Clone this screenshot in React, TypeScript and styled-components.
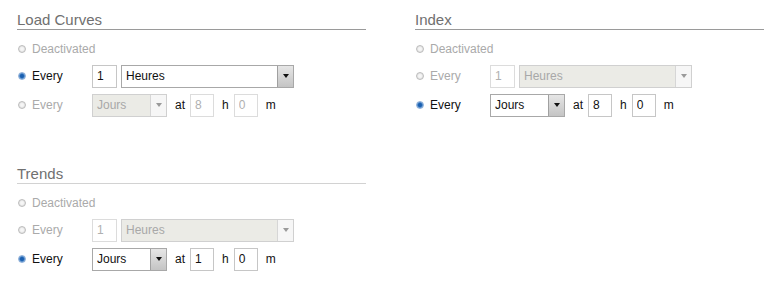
import styled, {createGlobalStyle} from "styled-components";

const GlobalStyle = createGlobalStyle`
    html, body {
        margin: 0;
        padding: 0;
        background: #fff;
    }

    body {
        font-family: "Liberation Sans", Arial, sans-serif;
        font-size: 12px;
        color: #111;
    }
`

type Schedule = {
    title: string;
    lineColor: string;
    mode: "hours" | "days";
    every: string;
    period: string;
    day: string;
    hour: string;
    minute: string;
}

const schedules: Schedule[] = [
    {title: "Load Curves", lineColor: "#9a9a9a", mode: "hours", every: "1", period: "Heures", day: "Jours", hour: "8", minute: "0"},
    {title: "Index", lineColor: "#9a9a9a", mode: "days", every: "1", period: "Heures", day: "Jours", hour: "8", minute: "0"},
    {title: "Trends", lineColor: "#d2d2d2", mode: "days", every: "1", period: "Heures", day: "Jours", hour: "1", minute: "0"},
]

const Select = ({value, width, disabled}: { value: string; width: number; disabled?: boolean }) => (
    <StyledSelect $width={width} $disabled={disabled}>
        <SelectValue>{value}</SelectValue>
        <SelectArrow $disabled={disabled}/>
    </StyledSelect>
)

const Section = ({s}: { s: Schedule }) => {
    const hours = s.mode === "hours";
    return (
        <StyledSection>
            <Title $line={s.lineColor}>{s.title}</Title>
            <Rows>
                <Row $height={20}>
                    <Radio/>
                    <Label $disabled>Deactivated</Label>
                </Row>
                <Row>
                    <Radio $checked={hours}/>
                    <Label $disabled={!hours}>Every</Label>
                    <Field defaultValue={s.every} disabled={!hours} $width={25}/>
                    <Select value={s.period} width={173} disabled={!hours}/>
                </Row>
                <Row>
                    <Radio $checked={!hours}/>
                    <Label $disabled={hours}>Every</Label>
                    <Select value={s.day} width={75} disabled={hours}/>
                    <Unit>at</Unit>
                    <Field defaultValue={s.hour} disabled={hours} $width={24}/>
                    <Unit>h</Unit>
                    <Field defaultValue={s.minute} disabled={hours} $width={24}/>
                    <Unit>m</Unit>
                </Row>
            </Rows>
        </StyledSection>
    )
}

export default function App() {
    return (
        <>
            <GlobalStyle/>
            <Page>
                {schedules.map(s => <Section key={s.title} s={s}/>)}
            </Page>
        </>
    )
}

const Page = styled.div`
    display: grid;
    grid-template-columns: 349px 349px;
    column-gap: 49px;
    row-gap: 48px;
    padding: 11px 0 0 17px;
`

const StyledSection = styled.section`
    display: flex;
    flex-direction: column;
`

const Title = styled.h2<{ $line: string }>`
    margin: 0;
    font-size: 15px;
    line-height: 18px;
    font-weight: normal;
    color: #707070;
    border-bottom: 1px solid ${p => p.$line};
`

const Rows = styled.div`
    display: flex;
    flex-direction: column;
    gap: 5px;
    margin-top: 9px;
`

const Row = styled.div<{ $height?: number }>`
    display: flex;
    align-items: center;
    height: ${p => p.$height ?? 24}px;
`

const Radio = styled.span<{ $checked?: boolean }>`
    box-sizing: border-box;
    width: 8px;
    height: 8px;
    margin: 0 6px 0 1px;
    border-radius: 50%;
    border: 1px solid ${p => p.$checked ? "#8fb0d8" : "#bdbdbd"};
    background: ${p => p.$checked
            ? "radial-gradient(circle, #1a5fb0 0 35%, #5f95d0 65%, #d4e2f0 100%)"
            : "radial-gradient(circle, #f6f6f6 0 30%, #d2d2d2 100%)"};
`

const Label = styled.span<{ $disabled?: boolean }>`
    width: 60px;
    color: ${p => p.$disabled ? "#aaa" : "#111"};
    white-space: nowrap;
`

const Field = styled.input<{ $width: number }>`
    box-sizing: border-box;
    width: ${p => p.$width}px;
    height: 23px;
    margin: 0 4px 0 0;
    padding: 0 0 0 4px;
    border: 1px solid ${p => p.disabled ? "#dcdcdc" : "#c6c6c6"};
    background: #fff;
    font: 12px "Liberation Sans", Arial, sans-serif;
    color: #111;
    outline: none;

    &:disabled {
        color: #b0b0b0;
    }
`

const StyledSelect = styled.div<{ $width: number; $disabled?: boolean }>`
    box-sizing: border-box;
    display: flex;
    align-items: stretch;
    width: ${p => p.$width}px;
    height: 23px;
    margin-right: 4px;
    border: 1px solid ${p => p.$disabled ? "#d0d0d0" : "#a8a8a8"};
    background: ${p => p.$disabled ? "#ebebe6" : "#fff"};
    color: ${p => p.$disabled ? "#a8a8a8" : "#111"};
`

const SelectValue = styled.span`
    flex: 1;
    display: flex;
    align-items: center;
    padding-left: 4px;
`

const SelectArrow = styled.span<{ $disabled?: boolean }>`
    box-sizing: border-box;
    width: 16px;
    display: flex;
    align-items: center;
    justify-content: center;
    border-left: 1px solid ${p => p.$disabled ? "#d6d6d6" : "#a0a0a0"};
    background: ${p => p.$disabled
            ? "#f6f6f6"
            : "linear-gradient(#e6e6e6, #c4c4c4)"};

    &::after {
        content: "";
        border-left: 3px solid transparent;
        border-right: 3px solid transparent;
        border-top: 4px solid ${p => p.$disabled ? "#9a9a9a" : "#111"};
    }
`

const Unit = styled.span`
    margin: 0 5px 0 4px;
    color: #111;
`
